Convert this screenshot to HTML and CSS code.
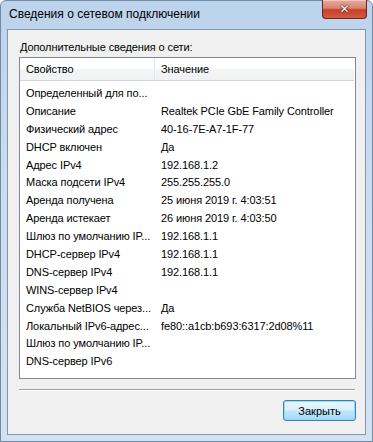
FILE: index.html
```html
<!DOCTYPE html>
<html lang="ru">
<head>
  <meta charset="UTF-8" />
  <title>Сведения о сетевом подключении</title>
  <link rel="stylesheet" href="styles.css">
</head>
<body>

  <div class="window">
    <div class="titlebar">
      <span class="title">Сведения о сетевом подключении</span>
      <button class="close-btn" type="button">✕</button>
    </div>

    <div class="client">
      <div class="caption">Дополнительные сведения о сети:</div>

      <div class="list">
        <div class="list-head">
          <div class="col-prop">Свойство</div>
          <div class="col-val">Значение</div>
        </div>
        <div class="list-body">
          <div class="row"><div>Определенный для по...</div><div></div></div>
          <div class="row"><div>Описание</div><div>Realtek PCIe GbE Family Controller</div></div>
          <div class="row"><div>Физический адрес</div><div>40-16-7E-A7-1F-77</div></div>
          <div class="row"><div>DHCP включен</div><div>Да</div></div>
          <div class="row"><div>Адрес IPv4</div><div>192.168.1.2</div></div>
          <div class="row"><div>Маска подсети IPv4</div><div>255.255.255.0</div></div>
          <div class="row"><div>Аренда получена</div><div>25 июня 2019 г. 4:03:51</div></div>
          <div class="row"><div>Аренда истекает</div><div>26 июня 2019 г. 4:03:50</div></div>
          <div class="row"><div>Шлюз по умолчанию IP...</div><div>192.168.1.1</div></div>
          <div class="row"><div>DHCP-сервер IPv4</div><div>192.168.1.1</div></div>
          <div class="row"><div>DNS-сервер IPv4</div><div>192.168.1.1</div></div>
          <div class="row"><div>WINS-сервер IPv4</div><div></div></div>
          <div class="row"><div>Служба NetBIOS через...</div><div>Да</div></div>
          <div class="row"><div>Локальный IPv6-адрес...</div><div>fe80::a1cb:b693:6317:2d08%11</div></div>
          <div class="row"><div>Шлюз по умолчанию IP...</div><div></div></div>
          <div class="row"><div>DNS-сервер IPv6</div><div></div></div>
        </div>
      </div>

      <div class="separator"></div>

      <div class="buttons">
        <button class="btn-default" type="button">Закрыть</button>
      </div>
    </div>
  </div>

</body>
</html>
```

FILE: styles.css
```css
body {
  margin: 0;
  font-family: "Liberation Sans", Arial, sans-serif;
  font-size: 11px;
  letter-spacing: -0.1px;
  color: #000;
  background: #fff;
}

.window {
  width: 373px;
  height: 442px;
  box-sizing: border-box;
  padding: 0 6px 6px 6px;
  display: flex;
  flex-direction: column;
  background: linear-gradient(to bottom, #bcd3ec 0%, #cbdcef 40%, #d3e2f2 100%);
  border: 1px solid #6f8aa8;
  border-radius: 6px 6px 0 0;
}

.titlebar {
  height: 28px;
  display: flex;
  align-items: flex-start;
}

.title {
  margin-top: 6px;
  margin-left: 2px;
  font-size: 12px;
  letter-spacing: 0;
  color: #000;
}

.close-btn {
  margin-left: auto;
  margin-top: -1px;
  margin-right: -1px;
  width: 45px;
  height: 19px;
  padding: 0;
  border: 1px solid #6b2519;
  border-top: none;
  border-radius: 0 0 4px 4px;
  background: linear-gradient(to bottom, #e9a99b 0%, #d98470 45%, #c5402a 55%, #d35c43 100%);
  color: #fff;
  font-family: "DejaVu Sans", sans-serif;
  font-size: 12px;
  font-weight: bold;
  line-height: 17px;
  text-shadow: 0 0 2px #3b0d06, 0 0 1px #3b0d06;
  box-shadow: inset 0 1px 0 rgba(255,255,255,0.4);
}

.client {
  flex: 1;
  background: #f0f0f0;
  border: 1px solid #8396ad;
  padding: 0 9px 0 11px;
  display: flex;
  flex-direction: column;
}

.caption {
  margin-top: 11px;
  margin-left: 1px;
  height: 16px;
}

.list {
  height: 320px;
  background: #fff;
  border: 1px solid #828790;
  display: flex;
  flex-direction: column;
}

.list-head {
  height: 22px;
  display: grid;
  grid-template-columns: 135px 1fr;
  background: linear-gradient(to bottom, #ffffff 0%, #ffffff 45%, #f3f4f6 55%, #f1f2f4 100%);
  border-bottom: 1px solid #d5d5d5;
  margin-right: 1px;
}

.list-head div {
  display: flex;
  align-items: center;
  padding-left: 6px;
}

.col-prop {
  border-right: 1px solid #e3e5e8;
}

.list-body {
  padding-top: 3px;
}

.row {
  height: 17.9px;
  display: grid;
  grid-template-columns: 135px 1fr;
  align-items: center;
}

.row div {
  padding-left: 6px;
  white-space: nowrap;
  overflow: hidden;
}

.separator {
  margin-top: 10px;
  margin-right: 1px;
  height: 1px;
  background: #a0a0a0;
  border-bottom: 1px solid #fff;
}

.buttons {
  display: flex;
  justify-content: flex-end;
  margin-top: 9px;
}

.btn-default {
  width: 73px;
  height: 21px;
  padding: 0;
  border: 1px solid #3c7fb1;
  border-radius: 3px;
  background: linear-gradient(to bottom, #eaf6fd 0%, #d9f0fc 45%, #bee6fd 55%, #a7d9f5 100%);
  box-shadow: inset 0 0 0 1px #8fdcfa;
  font-family: "Liberation Sans", Arial, sans-serif;
  font-size: 11px;
  color: #000;
}
```
